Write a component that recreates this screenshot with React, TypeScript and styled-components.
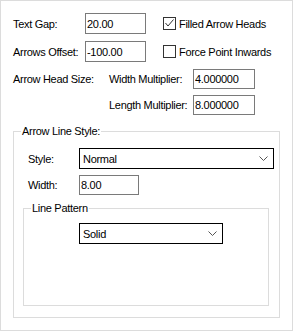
import React from 'react';
import styled, { createGlobalStyle } from 'styled-components';

const GlobalStyle = createGlobalStyle`
  body {
    margin: 0;
    background: #fff;
  }
  * {
    box-sizing: border-box;
  }
`;

const Panel = styled.div`
  width: 293px;
  height: 331px;
  border: 1px solid #dcdcdc;
  padding: 12px;
  background: #fff;
  font-family: "Liberation Sans", Arial, sans-serif;
  font-size: 11px;
  letter-spacing: -0.3px;
  color: #000;
  display: flex;
  flex-direction: column;
`;

const Row = styled.div<{ $top?: number; $indent?: number; $h?: number }>`
  display: flex;
  align-items: center;
  flex: none;
  height: ${p => p.$h ?? 21}px;
  margin-top: ${p => p.$top ?? 0}px;
  padding-left: ${p => p.$indent ?? 0}px;
`;

const Label = styled.span<{ $w?: number }>`
  flex: none;
  width: ${p => (p.$w ? `${p.$w}px` : 'auto')};
  white-space: nowrap;
`;

const TextBox = styled.input<{ $w: number }>`
  flex: none;
  width: ${p => p.$w}px;
  height: 100%;
  border: 1px solid #7a7a7a;
  padding: 0 1px;
  margin: 0;
  font: inherit;
  letter-spacing: inherit;
  color: #000;
  background: #fff;
  outline: none;
`;

const Check = styled.label<{ $gap?: number }>`
  display: flex;
  align-items: center;
  gap: 3px;
  margin-left: ${p => p.$gap ?? 0}px;
  white-space: nowrap;
`;

const Box = styled.span`
  width: 13px;
  height: 13px;
  border: 1px solid #333;
  background: #fff;
  display: flex;
  align-items: center;
  justify-content: center;
`;

const Combo = styled.div<{ $w: number }>`
  flex: none;
  width: ${p => p.$w}px;
  height: 21px;
  border: 1px solid #000;
  padding: 0 5px 0 3px;
  display: flex;
  align-items: center;
  justify-content: space-between;
  background: #fff;
`;

const Group = styled.fieldset<{ $pad: string; $grow?: boolean; $top?: number }>`
  margin: ${p => p.$top ?? 0}px 0 0 0;
  padding: ${p => p.$pad};
  border: 1px solid #dcdcdc;
  min-width: 0;
  display: flex;
  flex-direction: column;
  flex: ${p => (p.$grow ? 1 : 'none')};
`;

const Legend = styled.legend`
  padding: 0 1px;
  margin-left: -2px;
  line-height: 13px;
  font-size: 11px;
`;

const Chevron = () => (
  <svg width="9" height="6" viewBox="0 0 9 6">
    <polyline points="0.5,0.5 4.5,4.5 8.5,0.5" fill="none" stroke="#555" strokeWidth="1" />
  </svg>
);

const CheckBox = ({ checked, text, gap }: { checked?: boolean; text: string; gap?: number }) => (
  <Check $gap={gap}>
    <Box>
      {checked && (
        <svg width="11" height="11" viewBox="0 0 11 11">
          <polyline points="1.5,5 4,8 9.5,1.5" fill="none" stroke="#333" strokeWidth="1" />
        </svg>
      )}
    </Box>
    {text}
  </Check>
);

export default function App() {
  return (
    <>
      <GlobalStyle />
      <Panel>
        <Row>
          <Label $w={72}>Text Gap:</Label>
          <TextBox $w={61} defaultValue="20.00" />
          <CheckBox checked text="Filled Arrow Heads" gap={17} />
        </Row>
        <Row $top={7}>
          <Label $w={72}>Arrows Offset:</Label>
          <TextBox $w={61} defaultValue="-100.00" />
          <CheckBox text="Force Point Inwards" gap={17} />
        </Row>
        <Row $top={7} $h={20}>
          <Label $w={96}>Arrow Head Size:</Label>
          <Label $w={84}>Width Multiplier:</Label>
          <TextBox $w={62} defaultValue="4.000000" />
        </Row>
        <Row $top={6} $h={20} $indent={96}>
          <Label $w={84}>Length Multiplier:</Label>
          <TextBox $w={62} defaultValue="8.000000" />
        </Row>

        <Group $pad="10px 10px 11px 9px" $grow $top={10}>
          <Legend>Arrow Line Style:</Legend>
          <Row $indent={5}>
            <Label $w={51}>Style:</Label>
            <Combo $w={195}>
              Normal
              <Chevron />
            </Combo>
          </Row>
          <Row $top={6} $h={20} $indent={5}>
            <Label $w={51}>Width:</Label>
            <TextBox $w={60} defaultValue="8.00" />
          </Row>

          <Group $pad="8px 0 0 9px" $grow $top={7}>
            <Legend>Line Pattern</Legend>
            <Row $indent={46}>
              <Combo $w={144}>
                Solid
                <Chevron />
              </Combo>
            </Row>
          </Group>
        </Group>
      </Panel>
    </>
  );
}
